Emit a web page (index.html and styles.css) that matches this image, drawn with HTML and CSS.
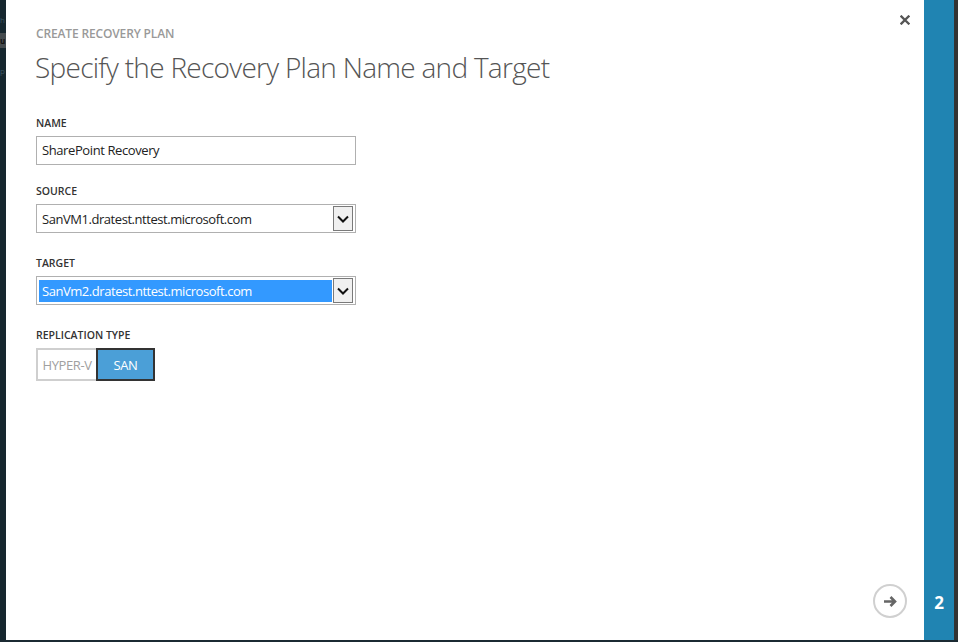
FILE: index.html
```html
<!DOCTYPE html>
<html>
<head>
<meta charset="utf-8">
<link rel="stylesheet" href="styles.css">
</head>
<body>
<div class="frame">
  <div class="rail">
    <div class="rail-h">h</div>
    <div class="rail-u">u</div>
    <div class="rail-p">p</div>
  </div>
  <div class="panel">
    <button class="close" aria-label="Close">
      <svg width="10" height="10" viewBox="0 0 10 10"><path d="M1.5 1.5 L8.5 8.5 M8.5 1.5 L1.5 8.5" stroke="#555" stroke-width="2.3" stroke-linecap="square"/></svg>
    </button>
    <div class="kicker">CREATE RECOVERY PLAN</div>
    <h1 class="title">Specify the Recovery Plan Name and Target</h1>

    <div class="field first">
      <div class="label">NAME</div>
      <div class="input">SharePoint Recovery</div>
    </div>

    <div class="field after-input">
      <div class="label">SOURCE</div>
      <div class="select">
        <span class="select-text">SanVM1.dratest.nttest.microsoft.com</span>
        <span class="select-btn"><svg width="12" height="8" viewBox="0 0 12 8"><path d="M1 1.5 L6 6.5 L11 1.5" fill="none" stroke="#111" stroke-width="2"/></svg></span>
      </div>
    </div>

    <div class="field after-select">
      <div class="label">TARGET</div>
      <div class="select">
        <span class="select-text selected">SanVm2.dratest.nttest.microsoft.com</span>
        <span class="select-btn"><svg width="12" height="8" viewBox="0 0 12 8"><path d="M1 1.5 L6 6.5 L11 1.5" fill="none" stroke="#111" stroke-width="2"/></svg></span>
      </div>
    </div>

    <div class="field after-select">
      <div class="label">REPLICATION TYPE</div>
      <div class="toggle">
        <span class="opt">HYPER-V</span>
        <span class="opt active">SAN</span>
      </div>
    </div>

    <button class="next" aria-label="Next">
      <svg width="15" height="13" viewBox="0 0 15 13"><path d="M1 6.5 H12 M7.5 2 L12 6.5 L7.5 11" fill="none" stroke="#666" stroke-width="2.6"/></svg>
    </button>
  </div>
  <div class="steps">
    <div class="step-num">2</div>
  </div>
  <div class="edge"></div>
</div>
</body>
</html>
```

FILE: styles.css
```css
* { box-sizing: border-box; }
html, body { margin: 0; padding: 0; }
body {
  width: 958px;
  height: 642px;
  background: #1b2a32;
  font-family: "Open Sans", "Noto Sans", sans-serif;
  overflow: hidden;
}
.frame {
  display: flex;
  height: 640px;
}
.rail {
  width: 6px;
  background: #16272f;
  overflow: hidden;
  padding-top: 15px;
  font-size: 8px;
  line-height: 10px;
  color: #3b5561;
}
.rail-h { height: 18px; }
.rail-u {
  background: #454b4e;
  color: #111;
  font-weight: 700;
  height: 15px;
  line-height: 15px;
}
.rail-p { margin-top: 18px; }
.panel {
  flex: 1;
  background: #fff;
  position: relative;
  padding: 26px 0 0 30px;
}
.close {
  position: absolute;
  top: 15px;
  right: 14px;
  border: 0;
  background: none;
  padding: 0;
  width: 10px;
  height: 10px;
  display: flex;
}
.kicker {
  font-size: 12px;
  line-height: 15px;
  color: #999;
  font-weight: 600;
  letter-spacing: -0.15px;
}
.title {
  margin: 9px 0 0 -1px;
  font-size: 28px;
  line-height: 34px;
  font-weight: 300;
  color: #555;
  letter-spacing: -0.72px;
}
.field.first { margin-top: 32px; }
.field.after-input { margin-top: 19px; }
.field.after-select { margin-top: 23px; }
.label {
  font-size: 10.5px;
  line-height: 15px;
  color: #333;
  font-weight: 600;
  margin-bottom: 5px;
}
.input {
  width: 320px;
  height: 29px;
  border: 1px solid #b0b0b0;
  font-size: 13px;
  line-height: 27px;
  padding-left: 5px;
  color: #222;
  letter-spacing: -0.4px;
}
.select {
  width: 320px;
  height: 29px;
  border: 1px solid #b0b0b0;
  display: flex;
  align-items: center;
  padding: 0 2px 0 1px;
  justify-content: space-between;
}
.select-text {
  font-size: 13px;
  line-height: 22px;
  color: #222;
  padding-left: 4px;
  letter-spacing: -0.45px;
  flex: 1;
  height: 22px;
}
.select-text.selected {
  background: #3399ff;
  color: #fff;
  margin-left: 1px;
  margin-right: 1px;
  padding-left: 3px;
}
.select-btn {
  width: 20px;
  height: 25px;
  border: 1px solid #7a7a7a;
  background: #f0f0f0;
  display: flex;
  align-items: center;
  justify-content: center;
}
.toggle {
  display: flex;
}
.opt {
  width: 60px;
  height: 33px;
  display: flex;
  align-items: center;
  justify-content: center;
  font-size: 13px;
  letter-spacing: -0.4px;
  color: #a0a0a0;
  border: 2px solid #cfcfcf;
  border-right: 0;
}
.opt.active {
  width: 59px;
  background: #4b9fd7;
  color: #fff;
  border: 2px solid #333;
}
.next {
  position: absolute;
  right: 17px;
  bottom: 22px;
  width: 34px;
  height: 34px;
  border-radius: 50%;
  border: 2px solid #d0d0d0;
  background: #fff;
  padding: 0;
  display: flex;
  align-items: center;
  justify-content: center;
}
.steps {
  width: 30px;
  background: #2084b2;
  display: flex;
  flex-direction: column;
  justify-content: flex-end;
  align-items: center;
  padding-bottom: 27px;
}
.step-num {
  color: #fff;
  font-weight: 700;
  font-size: 17px;
  line-height: 20px;
}
.edge {
  width: 4px;
  background: #333;
}
```
